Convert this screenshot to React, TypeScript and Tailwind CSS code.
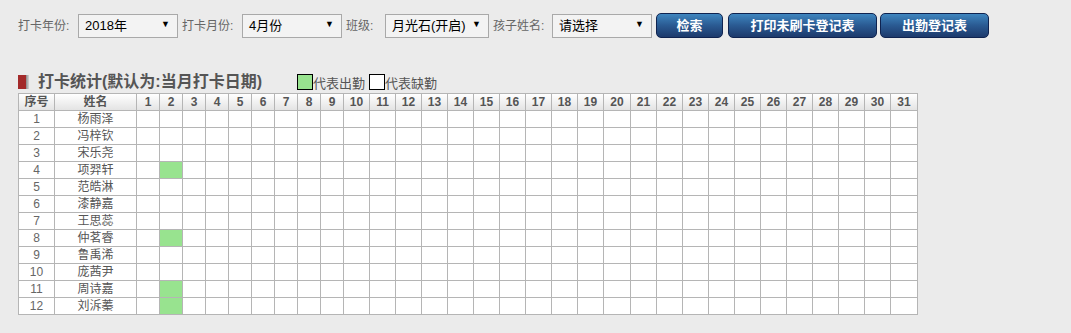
import React from "react";

const names = ["杨雨泽", "冯梓钦", "宋乐尧", "项羿轩", "范皓淋", "漆静嘉", "王思蕊", "仲茗睿", "鲁禹浠", "庞茜尹", "周诗嘉", "刘泝蓁"];
const present: Record<number, number[]> = { 3: [2], 7: [2], 10: [2], 11: [2] };
const days = Array.from({ length: 31 }, (_, i) => i + 1);

function FakeSelect({ value, width }: { value: string; width: string }) {
  return (
    <div className={`relative flex h-[24px] items-center border border-[#a9a9a9] bg-[#f3f3f3] pl-[6px] text-[13px] text-black ${width}`}>
      <span>{value}</span>
      <span className="absolute right-[7px] top-[5px] text-[9px] leading-none">▼</span>
    </div>
  );
}

function Btn({ label, width }: { label: string; width: string }) {
  return (
    <div
      className={`flex h-[25px] items-center justify-center rounded-[5px] border border-[#0f2350] bg-gradient-to-b from-[#3f86bf] via-[#2a5a92] to-[#1d3a6c] text-[13px] font-bold text-white ${width}`}
    >
      {label}
    </div>
  );
}

function colWidth(d: number) {
  if (d < 10) return "w-[23px]";
  if (d === 20 || d === 31) return "w-[27px]";
  return "w-[26px]";
}

export default function App() {
  return (
    <div
      className="h-[333px] w-[1071px] bg-[#ebebeb] text-[#555]"
      style={{ fontFamily: '"Liberation Sans", "Noto Sans CJK SC", sans-serif' }}
    >
      <div className="flex items-center pl-[18px] pt-[13px] text-[12px] text-[#666]">
        <span className="w-[60px]">打卡年份:</span>
        <FakeSelect value="2018年" width="w-[100px]" />
        <span className="ml-[4px] w-[60px]">打卡月份:</span>
        <FakeSelect value="4月份" width="w-[100px]" />
        <span className="ml-[4px] w-[39px]">班级:</span>
        <FakeSelect value="月光石(开启)" width="w-[104px]" />
        <span className="ml-[4px] w-[59px]">孩子姓名:</span>
        <FakeSelect value="请选择" width="w-[100px]" />
        <div className="ml-[4px]">
          <Btn label="检索" width="w-[67px]" />
        </div>
        <div className="ml-[5px]">
          <Btn label="打印未刷卡登记表" width="w-[149px]" />
        </div>
        <div className="ml-[3px]">
          <Btn label="出勤登记表" width="w-[109px]" />
        </div>
      </div>

      <div className="mt-[34px] flex h-[20px] items-center pl-[18px]">
        <div className="flex h-[14px]">
          <div className="w-[8px] bg-[#a32a2a]" />
          <div className="w-[3px] bg-gradient-to-r from-[#8a8a8a] to-[#d5d5d5]" />
        </div>
        <span className="ml-[9px] text-[16px] font-bold text-[#555]">打卡统计(默认为:当月打卡日期)</span>
        <div className="ml-[35px] flex items-center text-[13px] text-[#555]">
          <div className="h-[16px] w-[16px] border border-black bg-[#98e38f]" />
          <span className="mt-[3px]">代表出勤</span>
          <div className="ml-[4px] h-[16px] w-[16px] border border-black bg-white" />
          <span className="mt-[3px]">代表缺勤</span>
        </div>
      </div>

      <div className="pl-[18px] pt-[1px]">
        <table className="table-fixed border-collapse bg-white text-[12px]">
          <colgroup>
            <col className="w-[36px]" />
            <col className="w-[82px]" />
            {days.map((d) => (
              <col key={d} className={colWidth(d)} />
            ))}
          </colgroup>
          <thead>
            <tr className="h-[17px] bg-gradient-to-b from-white to-[#e2e2e2]">
              <th className="border border-[#b5b5b5] p-0 text-center font-bold leading-[15px] text-[#555]">序号</th>
              <th className="border border-[#b5b5b5] p-0 text-center font-bold leading-[15px] text-[#555]">姓名</th>
              {days.map((d) => (
                <th key={d} className="border border-[#b5b5b5] p-0 text-center font-bold leading-[15px] text-[#555]">
                  {d}
                </th>
              ))}
            </tr>
          </thead>
          <tbody>
            {names.map((n, i) => (
              <tr key={n} className="h-[17px]">
                <td className="border border-[#b5b5b5] p-0 text-center leading-[15px] text-[#666]">{i + 1}</td>
                <td className="border border-[#b5b5b5] p-0 text-center leading-[15px] text-[#555]">{n}</td>
                {days.map((d) => (
                  <td
                    key={d}
                    className={`border border-[#b5b5b5] p-0 ${present[i]?.includes(d) ? "bg-[#98e38f]" : ""}`}
                  />
                ))}
              </tr>
            ))}
          </tbody>
        </table>
      </div>
    </div>
  );
}
